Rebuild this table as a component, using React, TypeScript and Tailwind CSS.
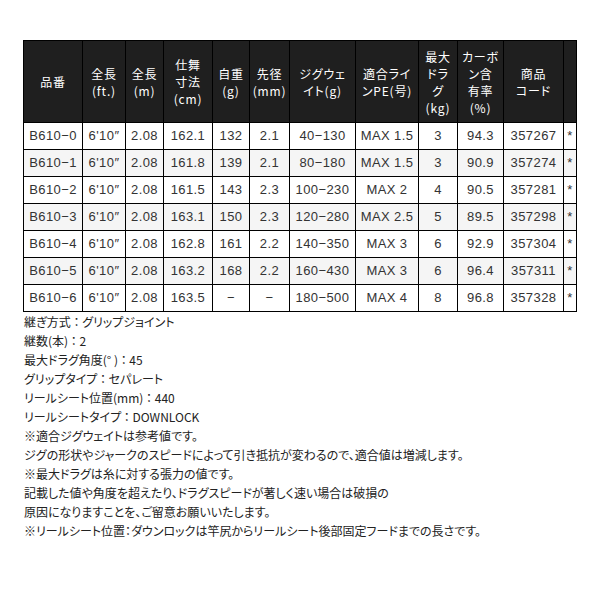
import React from "react";

const headers: string[][] = [
  ["品番"],
  ["全長", "(ft.)"],
  ["全長", "(m)"],
  ["仕舞", "寸法", "(cm)"],
  ["自重", "(g)"],
  ["先径", "(mm)"],
  ["ジグウェ", "イト(g)"],
  ["適合ライ", "ンPE(号)"],
  ["最大", "ドラ", "グ", "(kg)"],
  ["カーボ", "ン含", "有率", "(%)"],
  ["商品", "コード"],
  [""],
];

const ft = "6'10″";

const rows: string[][] = [
  ["B610−0", ft, "2.08", "162.1", "132", "2.1", "40−130", "MAX 1.5", "3", "94.3", "357267", "*"],
  ["B610−1", ft, "2.08", "161.8", "139", "2.1", "80−180", "MAX 1.5", "3", "90.9", "357274", "*"],
  ["B610−2", ft, "2.08", "161.5", "143", "2.3", "100−230", "MAX 2", "4", "90.5", "357281", "*"],
  ["B610−3", ft, "2.08", "163.1", "150", "2.3", "120−280", "MAX 2.5", "5", "89.5", "357298", "*"],
  ["B610−4", ft, "2.08", "162.8", "161", "2.2", "140−350", "MAX 3", "6", "92.9", "357304", "*"],
  ["B610−5", ft, "2.08", "163.2", "168", "2.2", "160−430", "MAX 3", "6", "96.4", "357311", "*"],
  ["B610−6", ft, "2.08", "163.5", "−", "−", "180−500", "MAX 4", "8", "96.8", "357328", "*"],
];

const notes = [
  "継ぎ方式 ： グリップジョイント",
  "継数(本) ： 2",
  "最大ドラグ角度(° ) ： 45",
  "グリップタイプ ： セパレート",
  "リールシート位置(mm) ： 440",
  "リールシートタイプ ： DOWNLOCK",
  "※適合ジグウェイトは参考値です。",
  "ジグの形状やジャークのスピードによって引き抵抗が変わるので、適合値は増減します。",
  "※最大ドラグは糸に対する張力の値です。",
  "記載した値や角度を超えたり、ドラグスピードが著しく速い場合は破損の",
  "原因になりますことを、ご留意お願いいたします。",
  "※リールシート位置：ダウンロックは竿尻からリールシート後部固定フードまでの長さです。",
];

const jp = {
  fontFamily: '"Noto Sans CJK JP", "Noto Sans", sans-serif',
  fontFeatureSettings: '"palt"',
};

const num = {
  fontFamily: '"Liberation Sans", "Noto Sans CJK JP", sans-serif',
};

export default function App() {
  return (
    <div className="w-[600px] h-[600px] bg-white pt-[40px] pl-[23px]" style={jp}>
      <div className="grid grid-cols-[59px_43px_38px_49px_37px_40px_66px_63px_39px_46px_60px_13px] w-[554px] border-l border-t border-black">
        {headers.map((h, i) => (
          <div
            key={"h" + i}
            className="h-[82px] bg-[#1f1f1f] border-r border-b border-black flex flex-col items-center justify-center text-white text-[12px] leading-[17px] tracking-[0.8px] whitespace-nowrap"
          >
            {h.map((l, j) => (
              <span key={j}>{l}</span>
            ))}
          </div>
        ))}
        {rows.map((r, ri) =>
          r.map((c, ci) => (
            <div
              key={ri + "-" + ci}
              style={num}
              className={`h-[27px] border-r border-b border-black flex items-center justify-center text-[13px] tracking-[0.4px] text-[#333] whitespace-nowrap ${
                ri % 2 === 1 ? "bg-[#f5f5f5]" : "bg-white"
              }`}
            >
              {c}
            </div>
          ))
        )}
      </div>
      <div className="pl-[1px] text-[12px] leading-[19px] text-[#222]">
        {notes.map((n, i) => (
          <div key={i} className="whitespace-nowrap">
            {n}
          </div>
        ))}
      </div>
    </div>
  );
}
